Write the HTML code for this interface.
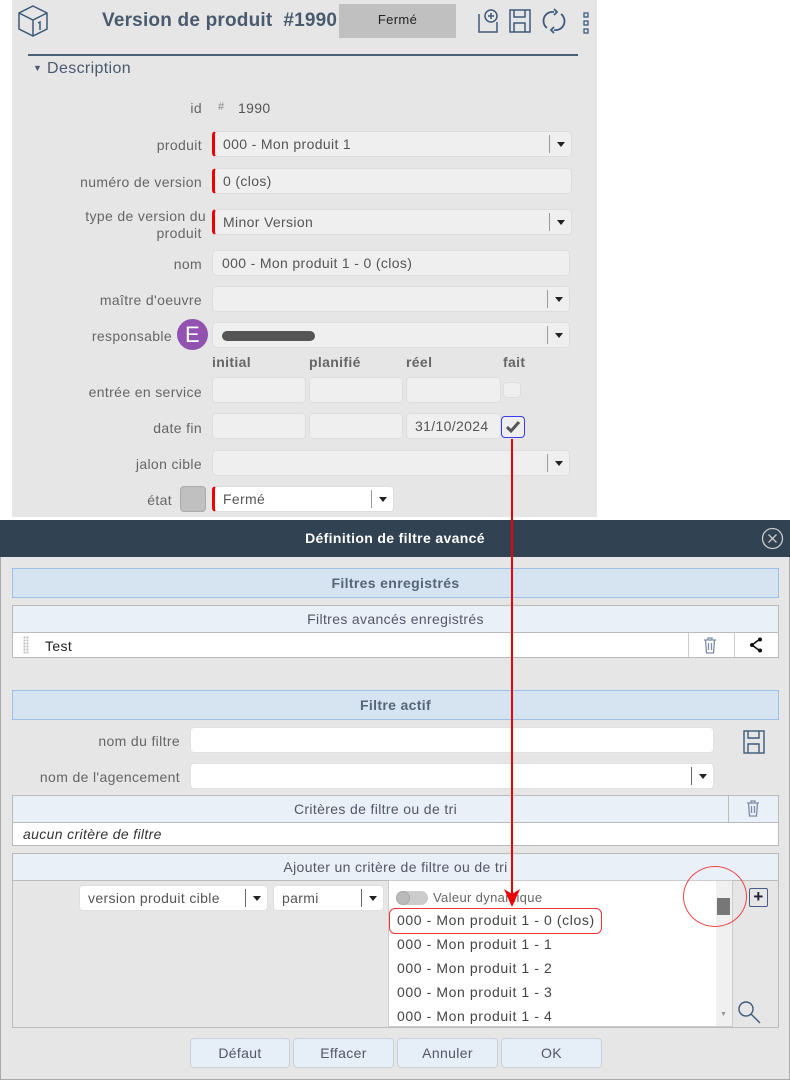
<!DOCTYPE html>
<html><head><meta charset="utf-8">
<style>
*{box-sizing:border-box;margin:0;padding:0}
body{width:790px;height:1080px;position:relative;background:#fff;font-family:"Liberation Sans",sans-serif;font-size:14px;letter-spacing:.35px;color:#555;overflow:hidden}
.a{position:absolute}
.lbl{position:absolute;text-align:right;color:#666;font-size:14px;white-space:nowrap}
.in{position:absolute;background:#efefef;border:1px solid #ddd;border-radius:4px;height:26px;line-height:24px;padding-left:9px;color:#555}
.req{border-left:3px solid #e00;padding-left:8px}
.dd{position:absolute;right:0;top:3px;width:22px;height:18px;border-left:1px solid #999}
.dd:after{content:"";position:absolute;left:7px;top:7px;border:4px solid transparent;border-top:5px solid #222;border-bottom:0}
.hdr{position:absolute;left:12px;width:767px;height:30px;background:#d6e4f2;border:1px solid #9dc0e4;text-align:center;line-height:28px;font-weight:bold;color:#556677;font-size:14px}
.sub{position:absolute;background:#e9f0f8;border:1px solid #bbb;text-align:center;color:#556;line-height:24px}
.wh{position:absolute;background:#fff;border-radius:4px;border:1px solid #e0e0e0}
.btn{position:absolute;top:1038px;height:30px;background:#e6eef8;border:1px solid #c8d0da;border-radius:4px;text-align:center;line-height:28px;color:#556;font-size:14px}
.opt{position:absolute;left:397px;font-size:14px;color:#444;letter-spacing:.6px}
</style></head><body>
<div class="a" style="left:12px;top:0;width:585px;height:517px;background:#e6e6e6"></div>
<svg class="a" style="left:17px;top:4px" width="32" height="34" viewBox="0 0 32 34" fill="none" stroke="#3e5a7a" stroke-width="1.5"><path d="M16 2 L30 9 L30 25 L16 32 L2 25 L2 9 Z M2 9 L16 16 L30 9 M16 16 L16 32"/><path d="M21 19 L23 18 L23 26"/></svg>
<div class="a" style="left:102px;top:10px;font-size:19px;font-weight:bold;color:#4a5a6e;letter-spacing:.2px">Version de produit&nbsp; #1990</div>
<div class="a" style="left:339px;top:4px;width:117px;height:34px;background:#c0c0c0;text-align:center;line-height:32px;color:#222;font-size:13px">Fermé</div>
<svg class="a" style="left:477px;top:8px" width="24" height="26" viewBox="0 0 24 26" fill="none" stroke="#3e5a7a" stroke-width="1.5"><path d="M2 6 L2 24 L20 24 L20 14"/><circle cx="14" cy="8" r="6"/><path d="M14 5 V11 M11 8 H17"/></svg>
<svg class="a" style="left:509px;top:9px" width="22" height="24" viewBox="0 0 22 24" fill="none" stroke="#3e5a7a" stroke-width="1.5"><rect x="1" y="1" width="20" height="22"/><path d="M5 1 V8 H16 V1 M5 23 V14 H16 V23"/></svg>
<svg class="a" style="left:541px;top:8px" width="26" height="26" viewBox="0 0 26 26" fill="none" stroke="#3e5a7a" stroke-width="1.8"><path d="M6 20 A9 9 0 0 1 13 4 M20 6 A9 9 0 0 1 13 22"/><path d="M13 1 L16 4 L13 7 M13 19 L10 22 L13 25"/></svg>
<svg class="a" style="left:582px;top:12px" width="8" height="22" viewBox="0 0 8 22" fill="none" stroke="#3e5a7a" stroke-width="1.3"><rect x="2" y="1" width="4" height="4"/><rect x="2" y="9" width="4" height="4"/><rect x="2" y="17" width="4" height="4"/></svg>
<div class="a" style="left:28px;top:54px;width:550px;height:2px;background:#4a6078"></div>
<div class="a" style="left:33px;top:60px;font-size:16px;color:#4a5a6e"><span style="font-size:9px;vertical-align:2px">▼</span> Description</div>

<div class="lbl" style="left:60px;width:142px;top:100px">id</div>
<div class="a" style="left:218px;top:101px;color:#888;font-size:11px">#</div>
<div class="a" style="left:238px;top:100px;color:#555">1990</div>

<div class="lbl" style="left:60px;width:142px;top:137px">produit</div>
<div class="in req" style="left:212px;top:131px;width:360px">000 - Mon produit 1<div class="dd"></div></div>
<div class="lbl" style="left:40px;width:162px;top:174px">numéro de version</div>
<div class="in req" style="left:212px;top:168px;width:360px">0 (clos)</div>
<div class="lbl" style="left:40px;width:166px;top:208px;line-height:17px">type de version du<br>produit&nbsp;</div>
<div class="in req" style="left:212px;top:209px;width:360px">Minor Version<div class="dd"></div></div>
<div class="lbl" style="left:60px;width:142px;top:256px">nom</div>
<div class="in" style="left:212px;top:250px;width:358px">000 - Mon produit 1 - 0 (clos)</div>
<div class="lbl" style="left:40px;width:162px;top:292px">maître d'oeuvre</div>
<div class="in" style="left:212px;top:286px;width:358px"><div class="dd"></div></div>
<div class="lbl" style="left:40px;width:132px;top:328px">responsable</div>
<div class="a" style="left:177px;top:319px;width:31px;height:31px;border-radius:50%;background:#9152b0;color:#fff;font-size:22px;text-align:center;line-height:31px">E</div>
<div class="in" style="left:212px;top:322px;width:358px"><div class="a" style="left:9px;top:8px;width:93px;height:10px;border-radius:5px;background:#555"></div><div class="dd"></div></div>
<div class="a" style="left:212px;top:354px;font-weight:bold;color:#666">initial</div>
<div class="a" style="left:309px;top:354px;font-weight:bold;color:#666">planifié</div>
<div class="a" style="left:406px;top:354px;font-weight:bold;color:#666">réel</div>
<div class="a" style="left:503px;top:354px;font-weight:bold;color:#666">fait</div>
<div class="lbl" style="left:40px;width:162px;top:384px">entrée en service</div>
<div class="in" style="left:212px;top:377px;width:94px"></div>
<div class="in" style="left:309px;top:377px;width:94px"></div>
<div class="in" style="left:406px;top:377px;width:95px"></div>
<div class="in" style="left:503px;top:382px;width:18px;height:16px"></div>
<div class="lbl" style="left:40px;width:162px;top:420px">date fin</div>
<div class="in" style="left:212px;top:413px;width:94px"></div>
<div class="in" style="left:309px;top:413px;width:94px"></div>
<div class="in" style="left:406px;top:413px;width:95px;padding-left:8px">31/10/2024</div>
<div class="a" style="left:501px;top:416px;width:24px;height:22px;border:1.5px solid #3a3aee;border-radius:4px;background:#eee"></div>
<svg class="a" style="left:505px;top:420px" width="16" height="14" viewBox="0 0 16 14"><path d="M2 7 L6 11 L14 2" fill="none" stroke="#555" stroke-width="3"/></svg>
<div class="lbl" style="left:40px;width:162px;top:456px">jalon cible</div>
<div class="in" style="left:212px;top:450px;width:358px"><div class="dd"></div></div>
<div class="lbl" style="left:100px;width:72px;top:492px">état</div>
<div class="a" style="left:180px;top:486px;width:26px;height:26px;background:#c0c0c0;border:1px solid #aaa;border-radius:4px"></div>
<div class="in req" style="left:212px;top:486px;width:182px;background:#fff">Fermé<div class="dd"></div></div>

<div class="a" style="left:0;top:520px;width:790px;height:560px;background:#e6e6e6;border:1px solid #aaa"></div>
<div class="a" style="left:0;top:520px;width:790px;height:37px;background:#314252;color:#fff;font-weight:bold;text-align:center;line-height:37px;font-size:14px">Définition de filtre avancé</div>
<svg class="a" style="left:761px;top:527px" width="23" height="23" viewBox="0 0 23 23" fill="none" stroke="#ccc" stroke-width="1.3"><circle cx="11.5" cy="11.5" r="10"/><path d="M7.5 7.5 L15.5 15.5 M15.5 7.5 L7.5 15.5"/></svg>
<div class="hdr" style="top:568px">Filtres enregistrés</div>
<div class="sub" style="left:12px;top:605px;width:767px;height:28px;line-height:26px">Filtres avancés enregistrés</div>
<div class="a" style="left:12px;top:632px;width:767px;height:26px;background:#fff;border:1px solid #bbb"></div>
<div class="a" style="left:23px;top:636px;width:6px;height:18px;background:radial-gradient(circle,#bbb 1px,transparent 1.2px) 0 0/3px 3px"></div>
<div class="a" style="left:45px;top:638px;color:#222">Test</div>
<div class="a" style="left:688px;top:633px;width:1px;height:24px;background:#ccc"></div>
<div class="a" style="left:734px;top:633px;width:1px;height:24px;background:#ccc"></div>
<svg class="a" style="left:703px;top:637px" width="14" height="17" viewBox="0 0 14 17" fill="none" stroke="#7d8da8" stroke-width="1.3"><path d="M1 3 H13 M5 3 V1 H9 V3 M2.5 3 L3.5 16 H10.5 L11.5 3 M5.5 6 V13 M8.5 6 V13"/></svg>
<svg class="a" style="left:749px;top:637px" width="14" height="16" viewBox="0 0 14 16"><path d="M11 2 L3 8 L11 14" fill="none" stroke="#111" stroke-width="1.6"/><circle cx="11" cy="2.5" r="2" fill="#111"/><circle cx="3" cy="8" r="2" fill="#111"/><circle cx="11" cy="13.5" r="2" fill="#111"/></svg>

<div class="hdr" style="top:690px">Filtre actif</div>
<div class="lbl" style="left:20px;width:160px;top:733px">nom du filtre</div>
<div class="wh" style="left:190px;top:727px;width:524px;height:26px"></div>
<svg class="a" style="left:743px;top:730px" width="22" height="24" viewBox="0 0 22 24" fill="none" stroke="#3e5a7a" stroke-width="1.4"><rect x="1" y="1" width="20" height="22"/><path d="M5 1 V8 H16 V1 M5 23 V14 H16 V23"/></svg>
<div class="lbl" style="left:20px;width:160px;top:769px">nom de l'agencement</div>
<div class="wh" style="left:190px;top:763px;width:524px;height:26px"><div class="dd" style="border-color:#666"></div></div>
<div class="sub" style="left:12px;top:795px;width:767px;height:28px;line-height:26px"><span style="position:relative;left:-20px">Critères de filtre ou de tri</span></div>
<div class="a" style="left:728px;top:796px;width:1px;height:26px;background:#bbb"></div>
<svg class="a" style="left:746px;top:800px" width="14" height="17" viewBox="0 0 14 17" fill="none" stroke="#7d8da8" stroke-width="1.3"><path d="M1 3 H13 M5 3 V1 H9 V3 M2.5 3 L3.5 16 H10.5 L11.5 3 M5.5 6 V13 M8.5 6 V13"/></svg>
<div class="a" style="left:12px;top:822px;width:767px;height:24px;background:#fff;border:1px solid #bbb;font-style:italic;color:#333;padding-left:10px;line-height:22px">aucun critère de filtre</div>

<div class="sub" style="left:12px;top:853px;width:767px;height:28px;line-height:26px">Ajouter un critère de filtre ou de tri</div>
<div class="a" style="left:12px;top:880px;width:767px;height:148px;border:1px solid #bbb;border-top:0"></div>
<div class="wh" style="left:79px;top:885px;width:189px;height:26px;line-height:24px;padding-left:8px;color:#555">version produit cible<div class="dd" style="border-color:#666"></div></div>
<div class="wh" style="left:273px;top:885px;width:111px;height:26px;line-height:24px;padding-left:8px;color:#555">parmi<div class="dd" style="border-color:#666"></div></div>
<div class="a" style="left:388px;top:880px;width:345px;height:147px;background:#fff;border:1px solid #ccc"></div>
<div class="a" style="left:716px;top:881px;width:16px;height:145px;background:#f0f0f0"></div>
<div class="a" style="left:717px;top:898px;width:13px;height:17px;background:#777"></div>
<div class="a" style="left:720px;top:1011px;font-size:7px;color:#999">▼</div>
<div class="a" style="left:396px;top:891px;width:32px;height:14px;border-radius:7px;background:#ccc"></div>
<div class="a" style="left:396px;top:891px;width:14px;height:14px;border-radius:7px;background:#bbb;border:1px solid #aaa"></div>
<div class="a" style="left:433px;top:890px;color:#666;font-size:13px">Valeur dynamique</div>
<div class="a" style="left:389px;top:908px;width:213px;height:26px;border:1.5px solid #e33;border-radius:6px"></div>
<div class="opt" style="top:912px">000 - Mon produit 1 - 0 (clos)</div>
<div class="opt" style="top:936px">000 - Mon produit 1 - 1</div>
<div class="opt" style="top:960px">000 - Mon produit 1 - 2</div>
<div class="opt" style="top:984px">000 - Mon produit 1 - 3</div>
<div class="opt" style="top:1008px">000 - Mon produit 1 - 4</div>
<div class="a" style="left:749px;top:888px;width:19px;height:19px;border:1px solid #4a5a8a;border-radius:2px;color:#223;text-align:center;line-height:16px;font-size:17px;font-weight:bold">+</div>
<svg class="a" style="left:737px;top:1000px" width="26" height="26" viewBox="0 0 26 26" fill="none" stroke="#3e5a7a" stroke-width="1.4"><circle cx="9" cy="9" r="7"/><path d="M14 14 L23 23"/></svg>
<div class="a" style="left:683px;top:866px;width:64px;height:61px;border:1px solid #e44;border-radius:50%"></div>
<div class="btn" style="left:190px;width:100px">Défaut</div>
<div class="btn" style="left:293px;width:101px">Effacer</div>
<div class="btn" style="left:397px;width:101px">Annuler</div>
<div class="btn" style="left:501px;width:101px">OK</div>

<div class="a" style="left:511px;top:439px;width:2px;height:458px;background:#e00"></div>
<svg class="a" style="left:503px;top:888px" width="18" height="20" viewBox="0 0 18 20"><path d="M1 1 L9 19 L17 1 L9 6 Z" fill="#e00"/></svg>
</body></html>
